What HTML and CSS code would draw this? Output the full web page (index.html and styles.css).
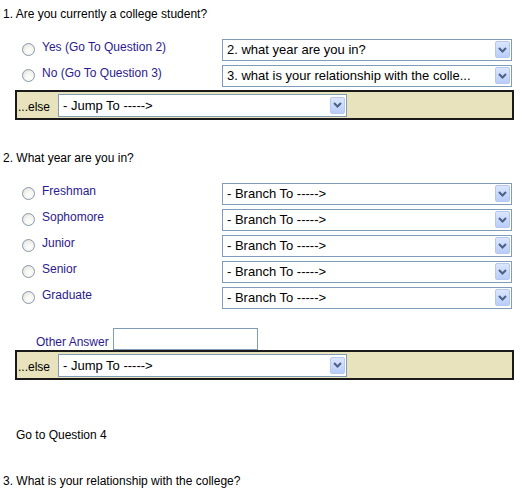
FILE: index.html
```html
<!DOCTYPE html>
<html>
<head>
<meta charset="utf-8">
<link rel="stylesheet" href="styles.css">
</head>
<body>
<div class="question q1">
  <p class="q-title">1. Are you currently a college student?</p>
  <div class="choices">
    <div class="choice">
      <span class="radio"></span><span class="label">Yes (Go To Question 2)</span>
      <div class="select wide"><span class="sel-text">2. what year are you in?</span><span class="arrow"><svg width="9" height="6" viewBox="0 0 9 6"><path d="M1 1 L4.5 4.5 L8 1" fill="none" stroke="#4d6185" stroke-width="2"/></svg></span></div>
    </div>
    <div class="choice">
      <span class="radio"></span><span class="label">No (Go To Question 3)</span>
      <div class="select wide"><span class="sel-text">3. what is your relationship with the colle...</span><span class="arrow"><svg width="9" height="6" viewBox="0 0 9 6"><path d="M1 1 L4.5 4.5 L8 1" fill="none" stroke="#4d6185" stroke-width="2"/></svg></span></div>
    </div>
  </div>
  <div class="else-box">
    <span class="else-label">...else</span>
    <div class="select jump"><span class="sel-text">- Jump To -----&gt;</span><span class="arrow"><svg width="9" height="6" viewBox="0 0 9 6"><path d="M1 1 L4.5 4.5 L8 1" fill="none" stroke="#4d6185" stroke-width="2"/></svg></span></div>
  </div>
</div>

<div class="question q2">
  <p class="q-title">2. What year are you in?</p>
  <div class="choices">
    <div class="choice">
      <span class="radio"></span><span class="label">Freshman</span>
      <div class="select wide"><span class="sel-text">- Branch To -----&gt;</span><span class="arrow"><svg width="9" height="6" viewBox="0 0 9 6"><path d="M1 1 L4.5 4.5 L8 1" fill="none" stroke="#4d6185" stroke-width="2"/></svg></span></div>
    </div>
    <div class="choice">
      <span class="radio"></span><span class="label">Sophomore</span>
      <div class="select wide"><span class="sel-text">- Branch To -----&gt;</span><span class="arrow"><svg width="9" height="6" viewBox="0 0 9 6"><path d="M1 1 L4.5 4.5 L8 1" fill="none" stroke="#4d6185" stroke-width="2"/></svg></span></div>
    </div>
    <div class="choice">
      <span class="radio"></span><span class="label">Junior</span>
      <div class="select wide"><span class="sel-text">- Branch To -----&gt;</span><span class="arrow"><svg width="9" height="6" viewBox="0 0 9 6"><path d="M1 1 L4.5 4.5 L8 1" fill="none" stroke="#4d6185" stroke-width="2"/></svg></span></div>
    </div>
    <div class="choice">
      <span class="radio"></span><span class="label">Senior</span>
      <div class="select wide"><span class="sel-text">- Branch To -----&gt;</span><span class="arrow"><svg width="9" height="6" viewBox="0 0 9 6"><path d="M1 1 L4.5 4.5 L8 1" fill="none" stroke="#4d6185" stroke-width="2"/></svg></span></div>
    </div>
    <div class="choice">
      <span class="radio"></span><span class="label">Graduate</span>
      <div class="select wide"><span class="sel-text">- Branch To -----&gt;</span><span class="arrow"><svg width="9" height="6" viewBox="0 0 9 6"><path d="M1 1 L4.5 4.5 L8 1" fill="none" stroke="#4d6185" stroke-width="2"/></svg></span></div>
    </div>
  </div>
  <div class="other">
    <span class="label">Other Answer</span><span class="text-input"></span>
  </div>
  <div class="else-box">
    <span class="else-label">...else</span>
    <div class="select jump"><span class="sel-text">- Jump To -----&gt;</span><span class="arrow"><svg width="9" height="6" viewBox="0 0 9 6"><path d="M1 1 L4.5 4.5 L8 1" fill="none" stroke="#4d6185" stroke-width="2"/></svg></span></div>
  </div>
</div>

<p class="goto">Go to Question 4</p>
<p class="q-title q3">3. What is your relationship with the college?</p>
</body>
</html>
```

FILE: styles.css
```css
html, body {
  margin: 0;
  padding: 0;
  background: #fff;
}
body {
  font-family: "Liberation Sans", Arial, sans-serif;
  font-size: 12px;
  color: #000;
  padding-top: 7px;
}
.q-title {
  margin: 0;
  padding-left: 3px;
  line-height: 14px;
}
.choices {
  margin-top: 18px;
}
.choice {
  display: flex;
  align-items: center;
  height: 21px;
  margin-bottom: 5px;
  padding-left: 22px;
}
.choice:last-child {
  margin-bottom: 4px;
}
.radio {
  width: 11px;
  height: 11px;
  border: 1px solid #8a98a8;
  border-radius: 50%;
  background: radial-gradient(circle at 60% 65%, #ffffff 0%, #f3f3f0 45%, #d9dad6 100%);
  margin-right: 7px;
  flex: none;
  margin-top: -1px;
}
.label {
  color: #2b1a8c;
  line-height: 14px;
  margin-top: -5px;
}
.choice .label {
  width: 180px;
}
.select {
  box-sizing: border-box;
  display: flex;
  align-items: center;
  border: 1px solid #7f9db9;
  background: #fff;
  height: 22px;
  padding: 1px;
  font-size: 13px;
}
.select.wide {
  width: 290px;
  height: 22px;
}
.sel-text {
  flex: 1;
  padding-left: 3px;
  white-space: nowrap;
  overflow: hidden;
}
.arrow {
  box-sizing: border-box;
  width: 15px;
  height: 17px;
  display: flex;
  align-items: center;
  justify-content: center;
  background: linear-gradient(#dbe6fd, #b9cdf8);
  border: 1px solid #b5c8f2;
  border-radius: 2px;
  flex: none;
}
.else-box {
  display: flex;
  align-items: center;
  box-sizing: border-box;
  margin-left: 15px;
  width: 499px;
  height: 30px;
  border: 2px solid #1a1a1a;
  background: #e8e3bd;
  padding-left: 1px;
}
.else-label {
  width: 40px;
  padding-top: 4px;
}
.select.jump {
  width: 289px;
  height: 23px;
}
.q2 {
  margin-top: 31px;
}
.q2 .choices {
  margin-top: 18px;
}
.q2 .choice:last-child {
  margin-bottom: 0;
}
.other {
  display: flex;
  align-items: center;
  margin-top: 20px;
  padding-left: 36px;
  height: 21px;
}
.other .label {
  margin-top: 6px;
  margin-right: 4px;
}
.text-input {
  box-sizing: border-box;
  width: 145px;
  height: 22px;
  border: 1px solid #7f9db9;
  background: #fff;
}
.q2 .else-box {
  margin-top: 1px;
}
.goto {
  margin: 48px 0 0;
  padding-left: 16px;
  line-height: 14px;
}
.q3 {
  margin-top: 32px;
}
```
